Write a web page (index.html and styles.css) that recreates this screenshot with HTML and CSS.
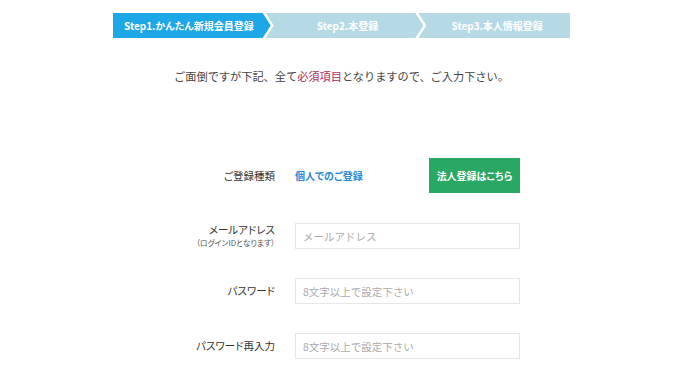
FILE: index.html
```html
<!DOCTYPE html>
<html lang="ja">
<head>
  <meta charset="UTF-8" />
  <title>かんたん新規会員登録</title>
  <link rel="stylesheet" href="styles.css">
</head>
<body>

  <div class="pagina">

    <!-- ステップ表示 -->
    <ol class="passos">
      <li class="passo ativo">Step1.かんたん新規会員登録</li>
      <li class="passo">Step2.本登録</li>
      <li class="passo ultimo">Step3.本人情報登録</li>
    </ol>

    <p class="aviso">ご面倒ですが下記、全て<span class="obrigatorio">必須項目</span>となりますので、ご入力下さい。</p>

    <form class="formulario">
      <div class="linha linha-tipo">
        <div class="rotulo">ご登録種類</div>
        <div class="campo tipo">
          <span class="pessoal">個人でのご登録</span>
          <a class="botao-empresa" href="#">法人登録はこちら</a>
        </div>
      </div>

      <div class="linha">
        <div class="rotulo">
          メールアドレス
          <small>（ログインIDとなります）</small>
        </div>
        <div class="campo">
          <input type="text" placeholder="メールアドレス">
        </div>
      </div>

      <div class="linha">
        <div class="rotulo">パスワード</div>
        <div class="campo">
          <input type="password" placeholder="8文字以上で設定下さい">
        </div>
      </div>

      <div class="linha">
        <div class="rotulo">パスワード再入力</div>
        <div class="campo">
          <input type="password" placeholder="8文字以上で設定下さい">
        </div>
      </div>
    </form>

  </div>

</body>
</html>
```

FILE: styles.css
```css
body {
  margin: 0;
  padding: 0 17px 0 0;
  background: #fff;
  font-family: "Noto Sans CJK JP", "Noto Sans", sans-serif;
  color: #444;
  overflow: hidden;
}

.pagina {
  width: 457px;
  margin: 0 auto;
  padding-top: 13px;
}

/* ステップ */
.passos {
  display: flex;
  margin: 0;
  padding: 0;
  list-style: none;
  font-feature-settings: "palt";
}

.passo {
  flex: 1;
  height: 25px;
  line-height: 25px;
  text-align: center;
  font-size: 10px;
  font-weight: bold;
  color: #fff;
  background: #b6d9e6;
  margin-left: -5px;
  padding-left: 6px;
  clip-path: polygon(0 0, calc(100% - 8px) 0, 100% 50%, calc(100% - 8px) 100%, 0 100%, 8px 50%);
}

.passo.ativo {
  background: #1da7e7;
  margin-left: 0;
  padding-left: 0;
  padding-right: 6px;
  clip-path: polygon(0 0, calc(100% - 8px) 0, 100% 50%, calc(100% - 8px) 100%, 0 100%);
}

.passo.ultimo {
  flex: 0.96;
  clip-path: polygon(0 0, 100% 0, 100% 100%, 0 100%, 8px 50%);
}

.aviso {
  margin: 29px 0 0;
  text-align: center;
  font-size: 11.2px;
  line-height: 18px;
  color: #444;
}

.obrigatorio {
  color: #a8305c;
}

/* フォーム */
.formulario {
  margin-top: 73px;
  font-feature-settings: "palt";
}

.linha {
  display: flex;
  align-items: center;
  height: 26px;
  margin-bottom: 29px;
}

.linha:last-child {
  margin-bottom: 0;
}

.linha-tipo {
  height: 35px;
  margin-bottom: 30px;
}

.rotulo {
  width: 162px;
  text-align: right;
  font-size: 10.5px;
  line-height: 14px;
  color: #333;
}

.rotulo small {
  display: block;
  font-size: 7.8px;
  line-height: 12px;
  color: #555;
}

.campo {
  width: 225px;
  margin-left: 20px;
}

.tipo {
  display: flex;
  align-items: center;
  justify-content: space-between;
}

.pessoal {
  color: #2a88d4;
  font-weight: bold;
  font-size: 10px;
}

.botao-empresa {
  display: block;
  width: 91px;
  height: 35px;
  line-height: 35px;
  text-align: center;
  background: #29a864;
  color: #fff;
  font-weight: bold;
  font-size: 10px;
  text-decoration: none;
}

.campo input {
  display: block;
  box-sizing: border-box;
  width: 100%;
  height: 26px;
  border: 1px solid #e6e6e6;
  padding: 0 7px;
  font-family: inherit;
  font-size: 10.5px;
  outline: none;
}

.campo input::placeholder {
  color: #aaa;
}
```
